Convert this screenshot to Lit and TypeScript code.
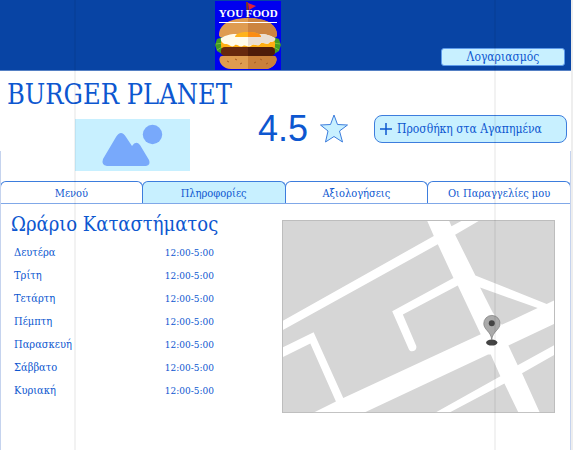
import { LitElement, html, css, svg } from "lit";
import { customElement, state } from "lit/decorators.js";
import { classMap } from "lit/directives/class-map.js";

const TABS = ["Μενού", "Πληροφορίες", "Αξιολογήσεις", "Οι Παραγγελίες μου"];
const DAYS = ["Δευτέρα", "Τρίτη", "Τετάρτη", "Πέμπτη", "Παρασκευή", "Σάββατο", "Κυριακή"];

@customElement("store-logo")
export class StoreLogo extends LitElement {
  static styles = css`
    :host { display: block; position: relative; width: 66px; height: 69px; background: #0000f0; }
    svg { display: block; }
    .name {
      position: absolute; inset: 3px 0 auto; text-align: center; white-space: nowrap;
      color: #fff; font: bold 11px/18px "Liberation Serif", serif; border-bottom: 1px solid #fff;
      margin: 0 4px; display: flex; justify-content: center;
    }
  `;
  render() {
    return html`
      <svg width="66" height="69" viewBox="0 0 66 69" aria-hidden="true">
        <path d="M32 1l1 19" stroke="#7a3c1c" stroke-width="2" />
        <path d="M33 2l8 3-7 4z" fill="#dc2438" />
        <path d="M4 34c0-11 12-17 29-17s29 6 29 17c0 2-2 3-5 3H9c-3 0-5-1-5-3z" fill="#df9c50" />
        <path d="M33 17c17 0 29 6 29 17 0 2-2 3-5 3H33z" fill="#cc8440" />
        <path d="M2 38l6-2 5 10-6 7-5-3-2-6zM64 38l-6-2-5 10 6 7 5-3 2-6z" fill="#419b24" />
        <path d="M1 43l7-1M2 49l7-4M65 43l-7-1M64 49l-7-4" stroke="#79c33a" stroke-width="1" />
        <rect x="6" y="39" width="54" height="9" rx="3" fill="#ffae12" />
        <path d="M6 37c6-3 9-4 14-4h26c5 0 8 1 14 4 1 3-2 4-5 4-3 4-6 0-9 1-3 5-6 0-9 2-4 4-6-1-9 1-4 2-5-2-8-1-4 4-6-2-9-1-3 0-6-3-5-6z" fill="#fffbea" />
        <path d="M33 33h13c5 0 8 1 14 4 1 3-2 4-5 4-3 4-6 0-9 1-3 5-6 0-9 2l-4 1z" fill="#eaded1" />
        <path d="M20 36c0-3 5-5 13-5s13 2 13 5z" fill="#ffb31b" />
        <path d="M33 31c8 0 13 2 13 5H33z" fill="#fb8c13" />
        <rect x="6" y="46" width="54" height="9" rx="4" fill="#67280d" />
        <path d="M33 46h23c5 0 5 9 0 9H33z" fill="#4f1c09" />
        <path d="M7 55h52c5 0 3 13-9 13H16C4 68 2 55 7 55z" fill="#df9c50" />
        <path d="M33 55h26c5 0 3 13-9 13H33z" fill="#ca803a" />
        <path d="M12 60l2 1M20 58l2 1M25 63l2-1M39 62l2-1M45 58l2 1M51 63l2-1" stroke="#a85d25" />
      </svg>
      <span class="name">YOU FOOD</span>
    `;
  }
}

@customElement("store-map")
export class StoreMap extends LitElement {
  static styles = css`
    :host { display: block; }
    svg { display: block; width: 100%; height: auto; }
  `;
  render() {
    return html`
      <svg viewBox="22 28 820 580" role="img" aria-label="Χάρτης">
        <rect x="22" y="28" width="820" height="580" fill="#d6d6d6" />
        ${svg`<g fill="#fff">
          <path d="M22 332L478 76L458 30H524L531 47L562 30H614L542 72L603 195L817 280L842 268V339L702 405L730 464L842 403V432L743 488L797 608H733L690 519L522 608H480L678 497L649 432H641L266 608H114L184 573L107 399L22 441V412L117 365L206 563L619 371L550 225L385 312L425 406C430 421 407 430 402 414L353 302L537 202L490 101L22 360Z" />
        </g>`}
        <path d="M617 231L790 292L682 343L655 306Z" fill="#d6d6d6" />
        <rect x="23.5" y="29.5" width="817" height="577" fill="none" stroke="#bdbdbd" stroke-width="3" />
        <ellipse cx="652" cy="396" rx="17" ry="9" fill="#444" />
        <path d="M652 388C650 363 628 358 628 339a24 24 0 0 1 49 0C677 358 654 363 652 388z" fill="#aaa" stroke="#777" stroke-width="2" />
        <circle cx="652" cy="338" r="9" fill="#444" />
      </svg>
    `;
  }
}

@customElement("app-root")
export class AppRoot extends LitElement {
  @state() private active = 1;

  static styles = css`
    :host {
      display: block; position: relative; box-sizing: border-box; min-height: 100vh; overflow: hidden;
      padding-right: 2px; background: #fff; color: #0d57d0;
      font-family: "Roboto Slab", "DejaVu Serif Condensed", "DejaVu Serif", serif;
    }
    * { box-sizing: border-box; }
    h1, h2 { margin: 0; font-weight: 400; white-space: nowrap; }
    button { font-family: inherit; color: inherit; margin: 0; cursor: pointer; white-space: nowrap; }
    .top {
      display: flex; height: 71px; padding: 1px 6px 0 calc(37.5% + 1px); background: #0844a4;
      border-bottom: 1px solid #5580c4;
    }
    .account {
      align-self: flex-end; margin: 0 0 4px auto; width: 124px; height: 18px; padding: 0;
      border: 1px solid #5e9bea; border-radius: 3px; background: #c8f0ff; font-size: 12px; line-height: 16px;
    }
    .summary { display: flex; justify-content: space-between; height: 110px; padding: 8px 4px 0 7px; }
    h1 { font-size: 27px; line-height: 32px; }
    .photo { display: block; width: 115px; height: 52px; margin: 8px 0 0 68px; background: #c8f0ff; }
    .rating { display: flex; align-items: center; height: 40px; margin-top: 30px; }
    .score { font: 36px/40px "Liberation Sans", sans-serif; }
    .star { margin: 0 25px 0 11px; }
    .favorite {
      display: flex; align-items: center; gap: 4px; width: 193px; height: 28px; padding: 0 0 0 4px;
      border: 1px solid #3d7ddd; border-radius: 8px; background: #c8f0ff; font-size: 12px;
    }
    .tabs { display: grid; grid-template-columns: repeat(4, 1fr); border-bottom: 1px solid #80a8e8; }
    .tab {
      height: 22px; padding: 1px 0 0; border: 1px solid #3d7ddd; border-bottom: 0;
      border-radius: 6px 6px 0 0; background: #fff; font-size: 11px;
    }
    .tab + .tab { margin-left: -1px; }
    .tab.active { background: #c8f0ff; }
    .info { display: grid; grid-template-columns: 282px 1fr; padding: 8px 16px 0 0; }
    h2 { padding-left: 11px; font-size: 20px; line-height: 24px; }
    table { width: 203px; margin: 5px 0 0 11px; border-collapse: collapse; font-size: 11px; }
    th, td { height: 23px; padding: 0; font-weight: 400; white-space: nowrap; }
    th { padding-left: 3px; text-align: left; }
    td { text-align: right; font-size: 10px; }
    store-map { margin-top: 8px; }
    .edges {
      position: absolute; inset: 151px 2px 0 0; border: solid #c5d3ee; border-width: 0 1px; pointer-events: none;
    }
    .guide { position: absolute; top: 0; bottom: 0; width: 2px; background: rgba(0, 0, 0, 0.05); pointer-events: none; }
    .start { left: 74px; }
    .end { right: 77px; }
    .outer { right: 0; background: #eee; }
  `;

  render() {
    return html`
      <header class="top">
        <store-logo></store-logo>
        <button class="account">Λογαριασμός</button>
      </header>
      <main>
        <section class="summary">
          <div>
            <h1>BURGER PLANET</h1>
            <svg class="photo" viewBox="0 0 115 52" aria-hidden="true">
              <g fill="#78a9fb">
                <circle cx="77.500" cy="15.500" r="9.700" />
                <path d="M28 40L41 18Q46 10 51 18L57 27Q61 21 65 26L74 41Q76 46 71 47H32Q26 46 28 40Z" />
              </g>
            </svg>
          </div>
          <div class="rating">
            <span class="score">4.5</span>
            <svg class="star" width="30" height="30" viewBox="0 0 30 30" aria-hidden="true">
              <path d="M15 1L18.500 10.500L28.500 11L20.500 17L23.500 28L15 22.500L6.500 28L9 17L1.500 11L11.500 10.500Z" fill="#c8f0ff" stroke="#3d7ddd" />
            </svg>
            <button class="favorite">
              <svg width="14" height="14" viewBox="0 0 14 14" aria-hidden="true">
                <path d="M7 1v12M1 7h12" stroke="#0d57d0" stroke-width="1.500" />
              </svg>
              Προσθήκη στα Αγαπημένα
            </button>
          </div>
        </section>
        <nav class="tabs">
          ${TABS.map(
            (label, i) => html`<button
              class=${classMap({ tab: true, active: i === this.active })}
              @click=${() => (this.active = i)}
            >${label}</button>`
          )}
        </nav>
        <section class="info">
          <div>
            <h2 id="hours">Ωράριο Καταστήματος</h2>
            <table aria-labelledby="hours">
              <tbody>
                ${DAYS.map((day) => html`<tr><th scope="row">${day}</th><td>12:00-5:00</td></tr>`)}
              </tbody>
            </table>
          </div>
          <store-map></store-map>
        </section>
      </main>
      <div class="edges"></div>
      <div class="guide start"></div>
      <div class="guide end"></div>
      <div class="guide outer"></div>
    `;
  }
}
